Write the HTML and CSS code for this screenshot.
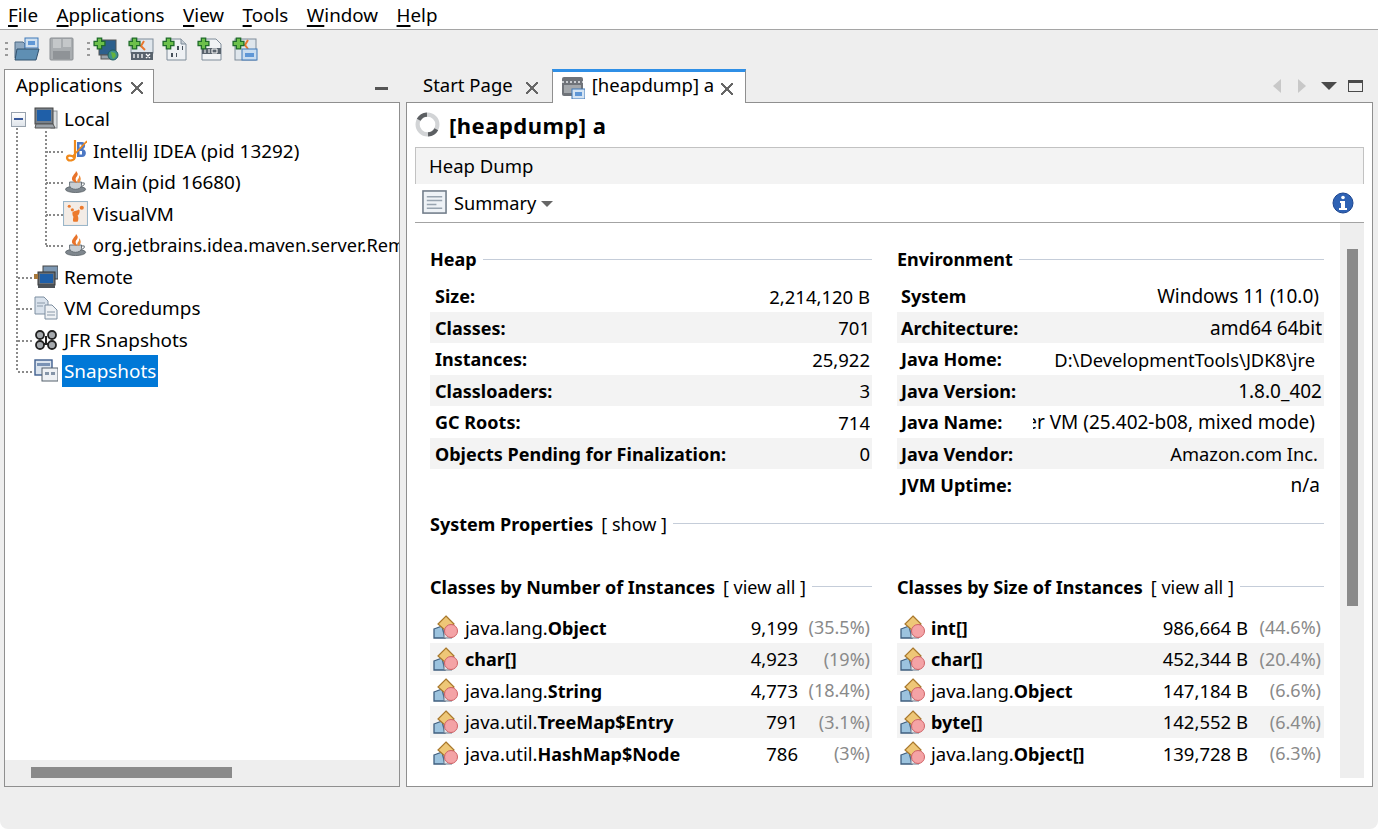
FILE: index.html
```html
<!DOCTYPE html>
<html lang="en">
<head>
    <meta charset="UTF-8">
    <title>VisualVM</title>
    <link rel="stylesheet" href="styles.css">
</head>
<body>

    <!-- Shared icons -->
    <svg class="defs" width="0" height="0">
        <symbol id="plus" viewBox="0 0 12 12">
            <path d="M4 1h4v3h3v4H8v3H4V8H1V4h3z" fill="#6cc04a" stroke="#1f6b2a" stroke-width="1.2"/>
        </symbol>
        <symbol id="cup" viewBox="0 0 24 24">
            <ellipse cx="11.500" cy="20" rx="11" ry="3.500" fill="#7f878e" stroke="#4c5359" stroke-width=".8"/>
            <path d="M5 12h13v4c0 2-3 4-6.500 4S5 18 5 16z" fill="#c9ced3" stroke="#5f686f"/>
            <path d="M18 13h3v2l-3 2" fill="none" stroke="#5f686f"/>
            <path d="M12 0c3 3 2 5 0 7-1 2 0 3 1 6-5-1-7-4-4-8 1-2 3-3 3-5z" fill="#e8732a"/>
            <path d="M15 4c3 3 3 6 0 9-2-1-2-2-1-4 1-1 2-3 1-5z" fill="#ef8f3f"/>
        </symbol>
        <symbol id="cls" viewBox="0 0 26 24">
            <path d="M1 14l8-3 3 12H1z" fill="#9cc3de" stroke="#3f5f7f" stroke-width="1.3"/>
            <path d="M11 15h8v8h-8z" fill="#e3e6ea" stroke="#6a7b8c"/>
            <path d="M13 1l8 8-8 7-8-7z" fill="#eec777" stroke="#a9782c" stroke-width="1.2"/>
            <circle cx="18" cy="16" r="6.500" fill="#f4a3a6" stroke="#cf6266" stroke-width="1"/>
        </symbol>
    </svg>

    <!-- Menu -->
    <nav class="menubar">
        <a href="#"><u>F</u>ile</a>
        <a href="#"><u>A</u>pplications</a>
        <a href="#"><u>V</u>iew</a>
        <a href="#"><u>T</u>ools</a>
        <a href="#"><u>W</u>indow</a>
        <a href="#"><u>H</u>elp</a>
    </nav>

    <!-- Toolbar -->
    <div class="toolbar">
        <span class="grip"></span>
        <svg class="tool" viewBox="0 0 26 24">
            <path d="M1 5h8l2 2v14H1z" fill="#8fa9c1" stroke="#4d6a86"/>
            <rect x="11" y="1" width="13" height="10" fill="#cfe0f0" stroke="#3f78b8"/>
            <rect x="14" y="4" width="7" height="4" fill="#5f97d6"/>
            <path d="M3 12h22l-3 11H1z" fill="#5f8fb3" stroke="#33536f"/>
        </svg>
        <svg class="tool" viewBox="0 0 26 24">
            <rect x="1" y="1" width="23" height="22" rx="1" fill="#a9adb0" stroke="#8b8f93"/>
            <rect x="4" y="2" width="8" height="9" fill="#c4c7c9"/>
            <rect x="14" y="2" width="8" height="8" fill="#c4c7c9"/>
            <rect x="4" y="14" width="17" height="8" fill="#8f9397"/>
        </svg>
        <span class="grip"></span>
        <svg class="tool tool-first" viewBox="0 0 26 24">
            <rect x="6" y="3" width="17" height="15" fill="#2d5f8c" stroke="#555"/>
            <rect x="8" y="18" width="12" height="4" fill="#9aa3ab" stroke="#555"/>
            <circle cx="20" cy="18" r="5" fill="#3f8f8a" stroke="#1f5c60"/>
            <path d="M18 15l4 1 1 3-3 3-1-3z" fill="#64b43c"/>
            <use href="#plus" x="0" y="0" width="13" height="13"/>
        </svg>
        <svg class="tool" viewBox="0 0 26 24">
            <rect x="3" y="2" width="22" height="14" fill="#dfe6ec" stroke="#7f8c99"/>
            <path d="M16 4l-3 5 4 4" fill="none" stroke="#e8772e" stroke-width="2"/>
            <rect x="3" y="15" width="22" height="8" fill="#59636d"/>
            <path d="M6 17v4M10 17v4M14 17v4M18 17l4 4M22 17l-4 4" stroke="#fff" stroke-width="1.300"/>
            <use href="#plus" x="0" y="0" width="13" height="13"/>
        </svg>
        <svg class="tool" viewBox="0 0 26 24">
            <path d="M5 2h14l5 5v16H5z" fill="#eef1f4" stroke="#7f8c99"/>
            <path d="M19 2v5h5" fill="#c6cdd4" stroke="#7f8c99"/>
            <path d="M15 9h2v4h-2zM20 9h1v4h-1zM9 16h2v4H9zM14 16h1v4h-1z" fill="#47515b"/>
            <use href="#plus" x="0" y="0" width="13" height="13"/>
        </svg>
        <svg class="tool" viewBox="0 0 26 24">
            <path d="M5 2h14l5 5v16H5z" fill="#f1f3f5" stroke="#7f8c99"/>
            <rect x="5" y="11" width="19" height="6" fill="#59636d"/>
            <path d="M8 12v4M12 12v4M15 12h5v4h-5z" stroke="#fff" fill="none"/>
            <use href="#plus" x="0" y="0" width="13" height="13"/>
        </svg>
        <svg class="tool" viewBox="0 0 26 24">
            <rect x="3" y="2" width="21" height="21" fill="#dfe6ec" stroke="#7f8c99"/>
            <path d="M16 3l-3 5 3 4" fill="none" stroke="#e8772e" stroke-width="2"/>
            <rect x="10" y="12" width="15" height="11" fill="#c9ddf0" stroke="#3f78b8"/>
            <rect x="13" y="16" width="9" height="4" fill="#5f97d6"/>
            <use href="#plus" x="0" y="0" width="13" height="13"/>
        </svg>
    </div>

    <main class="workspace">

        <!-- Left: Applications -->
        <section class="side">
            <div class="tabs">
                <div class="tab">Applications <span class="close"></span></div>
                <span class="minimize"></span>
            </div>
            <div class="side-panel">
                <ul class="tree">
                    <li class="tree-root">
                        <div class="row">
                            <span class="expander"></span>
                            <svg class="icon" viewBox="0 0 24 24">
                                <rect x="17" y="4" width="6" height="17" fill="#d9dde0" stroke="#8a9096"/>
                                <rect x="1" y="1" width="18" height="16" fill="#77808a" stroke="#444"/>
                                <rect x="3" y="3" width="14" height="11" fill="#1f5fa8"/>
                                <path d="M2 17h17l2 4H1z" fill="#9aa1a8" stroke="#555"/>
                            </svg>
                            <span class="label">Local</span>
                        </div>
                        <ul class="tree-sub">
                            <li class="row">
                                <svg class="icon-sm" viewBox="0 0 22 24">
                                    <path d="M12 3h5c4 0 4 6 1 7 4 1 4 8-1 8h-5z" fill="#4c78c4"/>
                                    <path d="M14.500 5.500h2v3h-2zM14.500 12h2.500v3.500h-2.500z" fill="#fff"/>
                                    <path d="M10 1v16c0 5-7 6-8 2 0-3 4-3 7-1" fill="none" stroke="#f08a1c" stroke-width="2.200"/>
                                    <path d="M7 18L22 2" stroke="#f08a1c" stroke-width="1.600"/>
                                </svg>
                                <span class="label">IntelliJ IDEA (pid 13292)</span>
                            </li>
                            <li class="row">
                                <svg class="icon-sm"><use href="#cup"/></svg>
                                <span class="label">Main (pid 16680)</span>
                            </li>
                            <li class="row">
                                <svg class="icon-sm icon-vm" viewBox="0 0 24 24">
                                    <rect x=".5" y=".5" width="23" height="23" fill="#f3ece6" stroke="#9ab6c9"/>
                                    <g fill="#ec7a2d">
                                        <circle cx="6" cy="5" r="1.500"/>
                                        <circle cx="9" cy="8.500" r="1.500"/>
                                        <circle cx="18" cy="6.500" r="2"/>
                                        <path d="M9 11c2-2 5-1 6-3l1 1c0 3-1 4-2 5 1 2 1 4 0 6h-4c-1-2 0-4 0-5-1-1-1-3-1-4z"/>
                                    </g>
                                </svg>
                                <span class="label">VisualVM</span>
                            </li>
                            <li class="row">
                                <svg class="icon-sm"><use href="#cup"/></svg>
                                <span class="label label-long">org.jetbrains.idea.maven.server.RemoteMavenServer36</span>
                            </li>
                        </ul>
                    </li>
                    <li class="tree-root row">
                        <svg class="icon" viewBox="0 0 24 24">
                            <rect x="9" y="1" width="15" height="13" fill="#7d98b3" stroke="#444"/>
                            <rect x="4" y="7" width="17" height="13" fill="#666f78" stroke="#333"/>
                            <rect x="6" y="9" width="13" height="9" fill="#1f5fa8"/>
                            <path d="M4 20h17v3H4z" fill="#4c5258"/>
                            <rect x="0" y="9" width="4" height="5" fill="#a8783a"/>
                        </svg>
                        <span class="label">Remote</span>
                    </li>
                    <li class="tree-root row">
                        <svg class="icon" viewBox="0 0 24 24">
                            <path d="M1 1h9l4 4v13H1z" fill="#d9e2ec" stroke="#7d8ea0"/>
                            <path d="M11 9h7l5 5v9H11z" fill="#eef1f4" stroke="#7d8ea0"/>
                            <path d="M3 7h8M3 10h6M13 16h8M13 19h8" stroke="#8a99a8"/>
                        </svg>
                        <span class="label">VM Coredumps</span>
                    </li>
                    <li class="tree-root row">
                        <svg class="icon" viewBox="0 0 24 24">
                            <path d="M3 16h18M12 8v8" stroke="#222" stroke-width="2"/>
                            <g fill="#a5a9ad" stroke="#222" stroke-width="1.800">
                                <circle cx="6" cy="7" r="4"/>
                                <circle cx="18" cy="7" r="4"/>
                                <circle cx="6" cy="17" r="4"/>
                                <circle cx="18" cy="17" r="4"/>
                            </g>
                        </svg>
                        <span class="label">JFR Snapshots</span>
                    </li>
                    <li class="tree-root row">
                        <svg class="icon" viewBox="0 0 24 24">
                            <rect x="1" y="1" width="17" height="15" fill="#dbe4ee" stroke="#3f5f8f" stroke-width="1.400"/>
                            <rect x="3" y="4" width="13" height="3" fill="#7a93b5"/>
                            <rect x="8" y="9" width="16" height="13" fill="#eef1f4" stroke="#55606c"/>
                            <path d="M11 13h4v3h-4zM17 13h4v3h-4z" fill="#8595a8"/>
                        </svg>
                        <span class="label selected">Snapshots</span>
                    </li>
                </ul>
                <div class="hscroll"><span class="hscroll-thumb"></span></div>
            </div>
        </section>

        <!-- Right: heap dump -->
        <section class="content">
            <div class="tabs">
                <div class="tab tab-plain">Start Page <span class="close"></span></div>
                <div class="tab tab-active">
                    <svg class="tab-icon" viewBox="0 0 24 24">
                        <rect x="1" y="2" width="21" height="19" rx="2" fill="#6f7379"/>
                        <path d="M1 7h21" stroke="#c9ccd0" stroke-width="2" stroke-dasharray="2 2"/>
                        <rect x="3" y="10" width="17" height="8" fill="#a3a7ab"/>
                        <rect x="11" y="14" width="13" height="10" fill="#d5e4f3" stroke="#3f78b8"/>
                        <rect x="14" y="17" width="7" height="4" fill="#5f97d6"/>
                    </svg>
                    [heapdump] a <span class="close"></span>
                </div>
                <div class="tab-tools">
                    <span class="arrow arrow-left"></span>
                    <span class="arrow arrow-right"></span>
                    <span class="arrow-down"></span>
                    <span class="maximize"></span>
                </div>
            </div>

            <div class="content-panel">
                <div class="title">
                    <svg class="spinner" viewBox="0 0 24 24">
                        <circle cx="12" cy="12" r="9.500" fill="none" stroke="#d2d4d6" stroke-width="4"/>
                        <path d="M3.500 7.500a9.500 9.500 0 0 1 8-5M20.500 16.500a9.500 9.500 0 0 1-8 5" fill="none" stroke="#5c5f62" stroke-width="4"/>
                    </svg>
                    <h1>[heapdump] a</h1>
                </div>

                <div class="view-tab">Heap Dump</div>

                <div class="view-bar">
                    <svg class="summary-icon" viewBox="0 0 26 26">
                        <rect x="1" y="1" width="24" height="23" fill="#eef2f6" stroke="#6f7b88" stroke-width="1.600"/>
                        <path d="M5 7h16M5 11h16M5 15h10M5 19h16" stroke="#98a4b0" stroke-width="1.600"/>
                    </svg>
                    <span>Summary</span>
                    <span class="caret"></span>
                    <svg class="info" viewBox="0 0 22 22">
                        <circle cx="11" cy="11" r="10" fill="#2e62b4" stroke="#1d4690"/>
                        <circle cx="11" cy="5.500" r="1.800" fill="#fff"/>
                        <path d="M8 9h5v7h2v2H7v-2h2v-5H8z" fill="#fff"/>
                    </svg>
                </div>

                <div class="report">
                    <div class="report-body">

                        <div class="columns">
                            <div class="col">
                                <h2 class="heading"><span>Heap</span></h2>
                                <dl class="props">
                                    <div class="prop"><dt>Size:</dt><dd>2,214,120 B</dd></div>
                                    <div class="prop"><dt>Classes:</dt><dd>701</dd></div>
                                    <div class="prop"><dt>Instances:</dt><dd>25,922</dd></div>
                                    <div class="prop"><dt>Classloaders:</dt><dd>3</dd></div>
                                    <div class="prop"><dt>GC Roots:</dt><dd>714</dd></div>
                                    <div class="prop"><dt>Objects Pending for Finalization:</dt><dd>0</dd></div>
                                </dl>
                            </div>
                            <div class="col">
                                <h2 class="heading"><span>Environment</span></h2>
                                <dl class="props props-env">
                                    <div class="prop"><dt>System</dt><dd class="inset-3">Windows 11 (10.0)</dd></div>
                                    <div class="prop"><dt>Architecture:</dt><dd>amd64 64bit</dd></div>
                                    <div class="prop"><dt>Java Home:</dt><dd class="inset-7 tight">D:\DevelopmentTools\JDK8\jre</dd></div>
                                    <div class="prop"><dt>Java Version:</dt><dd>1.8.0_402</dd></div>
                                    <div class="prop"><dt>Java Name:</dt><dd class="inset-7">OpenJDK 64-Bit Server VM (25.402-b08, mixed mode)</dd></div>
                                    <div class="prop"><dt>Java Vendor:</dt><dd class="inset-4 tight">Amazon.com Inc.</dd></div>
                                    <div class="prop"><dt>JVM Uptime:</dt><dd class="inset-2">n/a</dd></div>
                                </dl>
                            </div>
                        </div>

                        <h2 class="heading heading-sys"><span>System Properties</span> <a href="#">[ show ]</a></h2>

                        <div class="columns columns-classes">
                            <div class="col">
                                <h2 class="heading"><span>Classes by Number of Instances</span> <a href="#">[ view all ]</a></h2>
                                <ul class="classes">
                                    <li><svg class="cls"><use href="#cls"/></svg><span class="name">java.lang.<b>Object</b></span><span class="num">9,199</span><span class="pct">(35.5%)</span></li>
                                    <li><svg class="cls"><use href="#cls"/></svg><span class="name"><b>char[]</b></span><span class="num">4,923</span><span class="pct">(19%)</span></li>
                                    <li><svg class="cls"><use href="#cls"/></svg><span class="name">java.lang.<b>String</b></span><span class="num">4,773</span><span class="pct">(18.4%)</span></li>
                                    <li><svg class="cls"><use href="#cls"/></svg><span class="name">java.util.<b>TreeMap$Entry</b></span><span class="num">791</span><span class="pct">(3.1%)</span></li>
                                    <li><svg class="cls"><use href="#cls"/></svg><span class="name">java.util.<b>HashMap$Node</b></span><span class="num">786</span><span class="pct">(3%)</span></li>
                                </ul>
                            </div>
                            <div class="col">
                                <h2 class="heading"><span>Classes by Size of Instances</span> <a href="#">[ view all ]</a></h2>
                                <ul class="classes">
                                    <li><svg class="cls"><use href="#cls"/></svg><span class="name"><b>int[]</b></span><span class="num">986,664 B</span><span class="pct">(44.6%)</span></li>
                                    <li><svg class="cls"><use href="#cls"/></svg><span class="name"><b>char[]</b></span><span class="num">452,344 B</span><span class="pct">(20.4%)</span></li>
                                    <li><svg class="cls"><use href="#cls"/></svg><span class="name">java.lang.<b>Object</b></span><span class="num">147,184 B</span><span class="pct">(6.6%)</span></li>
                                    <li><svg class="cls"><use href="#cls"/></svg><span class="name"><b>byte[]</b></span><span class="num">142,552 B</span><span class="pct">(6.4%)</span></li>
                                    <li><svg class="cls"><use href="#cls"/></svg><span class="name">java.lang.<b>Object[]</b></span><span class="num">139,728 B</span><span class="pct">(6.3%)</span></li>
                                </ul>
                            </div>
                        </div>

                    </div>
                    <div class="vscroll"><span class="vscroll-thumb"></span></div>
                </div>
            </div>
        </section>
    </main>

</body>
</html>
```

FILE: styles.css
```css
* {
    box-sizing: border-box;
}
html, body {
    height: 100%;
}
html {
    background-color: #fff;
}
body {
    margin: 0;
    background-color: #eeeeee;
    border-radius: 0 0 8px 8px;
    color: #000;
    font-family: "Noto Sans", Arial, sans-serif;
    font-size: 18.500px;
    overflow: hidden;
}
a {
    color: inherit;
    text-decoration: none;
}
ul, dl, dd, h1, h2 {
    margin: 0;
    padding: 0;
    list-style: none;
}
.defs {
    position: absolute;
}

/* Menu */
.menubar {
    display: flex;
    gap: 18.500px;
    height: 30px;
    padding: 0 8px;
    align-items: center;
    background-color: #fff;
    border-bottom: 1px solid #a5a5a5;
    font-size: 18.800px;
}
.menubar u {
    text-decoration-thickness: 2px;
    text-underline-offset: 3px;
}

/* Toolbar */
.toolbar {
    display: flex;
    align-items: center;
    height: 37px;
    padding-left: 5px;
}
.grip {
    width: 3px;
    height: 18px;
    margin-right: 6px;
    background-image: radial-gradient(circle, #9a9a9a 1.2px, transparent 1.5px);
    background-size: 3px 6px;
}
.tool {
    width: 26px;
    height: 24px;
    margin-right: 8.600px;
}
.grip + .tool-first {
    margin-left: -3px;
}
.toolbar .grip:nth-of-type(n+2) {
    margin-left: 4px;
}

/* Main area */
.workspace {
    display: flex;
    height: 720px;
    padding: 2px 5px 0 4px;
    gap: 6px;
}
.side {
    width: 396px;
    display: flex;
    flex-direction: column;
}
.content {
    flex: 1;
    min-width: 0;
    display: flex;
    flex-direction: column;
}

/* Tabs */
.tabs {
    display: flex;
    align-items: stretch;
    height: 33px;
    position: relative;
}
.tab {
    display: flex;
    align-items: center;
    gap: 9px;
    height: 34px;
    padding: 0 10px 5px 11px;
    background-color: #fff;
    border: 1px solid #8f8f8f;
    border-bottom: none;
    position: relative;
    z-index: 1;
}
.tab-plain {
    background: none;
    border-color: transparent;
    padding-left: 16px;
    padding-right: 13px;
    gap: 13px;
}
.tab-active {
    padding-left: 8px;
    padding-right: 12px;
    padding-bottom: 7px;
    border-color: #8f8f8f;
    border-top: 3px solid #2f8fe6;
    gap: 7px;
}
.tab-icon {
    width: 24px;
    height: 24px;
    margin-top: 5px;
}
.close {
    width: 12px;
    height: 12px;
    margin-top: 7px;
    background:
        linear-gradient(45deg, transparent 44%, #666 44%, #666 56%, transparent 56%),
        linear-gradient(-45deg, transparent 44%, #666 44%, #666 56%, transparent 56%);
}
.tab-active .close {
    margin-top: 10px;
}
.minimize {
    position: absolute;
    left: 371px;
    top: 18px;
    width: 13px;
    height: 3px;
    background-color: #555;
}
.tab-tools {
    margin-left: auto;
    display: flex;
    align-items: center;
    padding-right: 10px;
    padding-top: 1px;
}
.arrow {
    width: 0;
    height: 0;
    border-top: 7px solid transparent;
    border-bottom: 7px solid transparent;
}
.arrow-left {
    border-right: 8px solid #c8c8c8;
    margin-right: 17px;
}
.arrow-right {
    border-left: 8px solid #c8c8c8;
    margin-right: 15px;
}
.arrow-down {
    width: 0;
    height: 0;
    border-left: 8px solid transparent;
    border-right: 8px solid transparent;
    border-top: 8px solid #4a4a4a;
    margin-right: 11px;
}
.maximize {
    width: 15px;
    height: 12px;
    border: 1px solid #4a4a4a;
    border-top-width: 3px;
}

/* Left panel */
.side-panel {
    flex: 1;
    min-height: 0;
    background-color: #fff;
    border: 1px solid #8f8f8f;
    display: flex;
    flex-direction: column;
    overflow: hidden;
}
.tree {
    flex: 1;
    padding-top: .5px;
    position: relative;
    font-size: 18.900px;
}
.tree::before {
    content: "";
    position: absolute;
    left: 11px;
    top: 20px;
    height: 247px;
    border-left: 2px dotted #8a8a8a;
}
.row {
    display: flex;
    align-items: center;
    height: 31.500px;
    white-space: nowrap;
    position: relative;
}
.tree-root.row {
    padding-left: 29px;
}
.tree-root > .row {
    padding-left: 6px;
}
.tree-root.row::before {
    content: "";
    position: absolute;
    left: 13px;
    top: 50%;
    width: 14px;
    border-top: 2px dotted #8a8a8a;
}
.expander {
    width: 15px;
    height: 15px;
    margin-right: 8px;
    border: 1px solid #98a2ad;
    background: linear-gradient(#fff, #dfe4ea);
    position: relative;
    z-index: 1;
}
.expander::before {
    content: "";
    position: absolute;
    left: 2px;
    top: 5px;
    width: 9px;
    height: 2px;
    background-color: #3b5a9c;
}
.icon {
    width: 24px;
    height: 24px;
    margin-right: 4px;
    flex: none;
}
.tree-sub {
    position: relative;
    padding-left: 60px;
}
.tree-sub::before {
    content: "";
    position: absolute;
    left: 40px;
    top: -4px;
    height: 114px;
    border-left: 2px dotted #8a8a8a;
}
.tree-sub .row::before {
    content: "";
    position: absolute;
    left: -19px;
    top: 50%;
    width: 17px;
    border-top: 2px dotted #8a8a8a;
}
.icon-sm {
    width: 22px;
    height: 24px;
    margin-right: 4px;
    flex: none;
}
.icon-vm {
    width: 25px;
    height: 25px;
    margin-left: -2px;
    margin-right: 3px;
}
.label {
    padding: 0 2px;
}
.label-long {
    font-size: 18.200px;
}
.selected {
    background-color: #0078d7;
    color: #fff;
    height: 32px;
    display: flex;
    align-items: center;
}
.hscroll {
    height: 26px;
    background-color: #eeeeee;
    padding: 7px 26px;
    flex: none;
}
.hscroll-thumb {
    display: block;
    width: 201px;
    height: 11px;
    background-color: #8a8a8a;
}

/* Right panel */
.content-panel {
    flex: 1;
    min-height: 0;
    background-color: #fff;
    border: 1px solid #8f8f8f;
    padding: 0 8px 8px;
    display: flex;
    flex-direction: column;
}
.title {
    display: flex;
    align-items: center;
    height: 44px;
    padding-bottom: 1px;
    gap: 9px;
}
.spinner {
    width: 25px;
    height: 25px;
}
.title h1 {
    font-size: 22px;
    font-weight: 700;
    letter-spacing: .5px;
}
.view-tab {
    height: 37px;
    padding: 0 0 2px 13px;
    display: flex;
    align-items: center;
    background-color: #f3f3f3;
    border: 1px solid #c2c2c2;
    border-bottom: none;
}
.view-bar {
    display: flex;
    align-items: center;
    height: 39px;
    padding: 0 10px 1px 7px;
    border-bottom: 1px solid #a3a3a3;
    font-size: 18.200px;
}
.summary-icon {
    width: 25px;
    height: 25px;
    margin-right: 7px;
}
.caret {
    width: 0;
    height: 0;
    margin: 3px 0 0 5px;
    border-left: 6px solid transparent;
    border-right: 6px solid transparent;
    border-top: 6px solid #666;
}
.info {
    width: 22px;
    height: 22px;
    margin-left: auto;
}

/* Report */
.report {
    flex: 1;
    min-height: 0;
    display: flex;
}
.report-body {
    flex: 1;
    min-width: 0;
    padding: 20px 16px 0 15px;
    overflow: hidden;
}
.vscroll {
    width: 24px;
    background-color: #eeeeee;
    padding-top: 26px;
    padding-left: 7px;
    flex: none;
}
.vscroll-thumb {
    display: block;
    width: 11px;
    height: 357px;
    background-color: #8a8a8a;
}
.columns {
    display: flex;
    gap: 25px;
}
.col {
    min-width: 0;
}
.col:first-child {
    width: 442px;
    flex: none;
}
.col:last-child {
    flex: 1;
}
.heading {
    display: flex;
    align-items: center;
    gap: 6px;
    height: 32px;
    font-size: 18px;
    font-weight: 400;
    white-space: nowrap;
}
.heading span {
    font-weight: 700;
}
.heading::after {
    content: "";
    flex: 1;
    border-top: 1px solid #c5cdd9;
}
.heading a {
    margin-left: 2px;
}
.heading-sys {
    margin-top: 7px;
}
.columns-classes {
    margin-top: 31px;
}
.props {
    padding-top: 5px;
}
.prop {
    display: flex;
    align-items: center;
    justify-content: space-between;
    height: 31.500px;
    padding: 1px 2px 0 5px;
    white-space: nowrap;
}
.prop:nth-child(even) {
    background-color: #f3f3f3;
}
.prop dt {
    font-size: 18px;
    font-weight: 700;
    flex: none;
}
.prop dd {
    flex: 1;
    min-width: 0;
    overflow: hidden;
    display: flex;
    justify-content: flex-end;
}
.props-env dd {
    font-size: 19px;
}
.props-env dd.tight {
    font-size: 18.300px;
}
.props-env .prop {
    padding-left: 4px;
}
.props-env dt {
    min-width: 132px;
}
.inset-2 {
    padding-right: 2px;
}
.inset-3 {
    padding-right: 3px;
}
.inset-4 {
    padding-right: 4px;
}
.inset-7 {
    padding-right: 7px;
}
.classes {
    padding-top: 9px;
}
.classes li {
    display: flex;
    align-items: center;
    height: 31.500px;
    padding-left: 3px;
    white-space: nowrap;
}
.classes li:nth-child(even) {
    background-color: #f3f3f3;
}
.classes b {
    font-size: 18px;
}
.cls {
    width: 26px;
    height: 24px;
    margin-right: 5px;
    flex: none;
}
.col:last-child .cls {
    margin-right: 4px;
}
.name {
    flex: 1;
    min-width: 0;
    overflow: hidden;
    padding-left: 1px;
}
.num {
    width: 115px;
    text-align: right;
}
.pct {
    width: 74px;
    padding-right: 2px;
    text-align: right;
    color: #8a8a8a;
    font-size: 18px;
}
.col:last-child .pct {
    width: 76px;
    padding-right: 3px;
}
```
